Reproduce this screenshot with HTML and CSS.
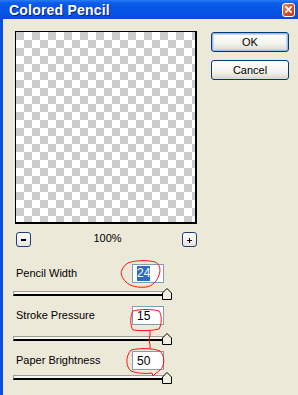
FILE: index.html
```html
<!DOCTYPE html>
<html lang="en">
<head>
    <meta charset="UTF-8">
    <meta name="viewport" content="width=device-width, initial-scale=1.0">
    <title>Colored Pencil</title>
    <link rel="stylesheet" href="styles.css">
</head>
<body>
    <div class="window">
        <div class="titlebar">
            <span class="title">Colored Pencil</span>
            <span class="closeBtn">
                <svg width="7" height="7" viewBox="0 0 7 7">
                    <path d="M1 1 L6 6 M6 1 L1 6" stroke="#fff" stroke-width="1.8" stroke-linecap="square"/>
                </svg>
            </span>
        </div>

        <div class="client">
            <div class="topRow">
                <div class="previewCol">
                    <div class="preview"></div>
                    <div class="zoomRow">
                        <span class="zoomBtn">
                            <svg width="13" height="13" viewBox="0 0 13 13"><rect x="4" y="6" width="5" height="2" fill="#000"/></svg>
                        </span>
                        <span class="zoomValue">100%</span>
                        <span class="zoomBtn">
                            <svg width="13" height="13" viewBox="0 0 13 13"><path d="M4 7.5 H9 M6.5 5 V10" stroke="#000" stroke-width="1"/></svg>
                        </span>
                    </div>
                </div>
                <div class="buttonCol">
                    <button class="dlgBtn defaultBtn">OK</button>
                    <button class="dlgBtn">Cancel</button>
                </div>
            </div>

            <div class="params">
                <div class="param">
                    <div class="paramHead">
                        <span class="paramLabel">Pencil Width</span>
                        <span class="paramBox"><span class="selected">24</span></span>
                    </div>
                    <div class="slider">
                        <div class="track"></div>
                        <svg class="thumb" width="10" height="12" viewBox="0 0 10 12"><polygon points="5,0.5 9.5,5 9.5,11.5 0.5,11.5 0.5,5" fill="#F1EFE2" stroke="#000"/></svg>
                    </div>
                </div>
                <div class="param">
                    <div class="paramHead">
                        <span class="paramLabel">Stroke Pressure</span>
                        <span class="paramBox">15</span>
                    </div>
                    <div class="slider">
                        <div class="track"></div>
                        <svg class="thumb" width="10" height="12" viewBox="0 0 10 12"><polygon points="5,0.5 9.5,5 9.5,11.5 0.5,11.5 0.5,5" fill="#F1EFE2" stroke="#000"/></svg>
                    </div>
                </div>
                <div class="param">
                    <div class="paramHead">
                        <span class="paramLabel">Paper Brightness</span>
                        <span class="paramBox">50</span>
                    </div>
                    <div class="slider">
                        <div class="track"></div>
                        <svg class="thumb" width="10" height="12" viewBox="0 0 10 12"><polygon points="5,0.5 9.5,5 9.5,11.5 0.5,11.5 0.5,5" fill="#F1EFE2" stroke="#000"/></svg>
                    </div>
                </div>
            </div>
        </div>

        <!-- hand drawn red marks over the value boxes -->
        <svg class="marks" width="298" height="395" viewBox="0 0 298 395">
            <g fill="none" stroke="#FF1010" stroke-width="1">
                <path d="M128 263 C136 260 148 260 155 262 C160 264 161 270 159 275 C157 281 153 286 146 287 C138 288 130 286 126 282 C122 278 120 273 122 270 C123 267 125 265 128 263 Z"/>
                <path d="M133 311 C140 309 152 309 159 311 C162 315 162 324 159 329 C152 331 140 331 133 330 C130 326 130 316 133 311 Z"/>
                <path d="M150 331 L150 335 L149 340 L150 345 L150 349"/>
                <path d="M131 350 C140 348 152 348 160 351 C165 356 165 366 160 370 C158 372 156 373 155 374 L153 376 L152 373 C144 374 136 373 131 371 C126 367 125 357 131 350 Z"/>
            </g>
        </svg>
    </div>
</body>
</html>
```

FILE: styles.css
```css
* {
    box-sizing: border-box;
}
body {
    margin: 0;
    background-color: #ECE9D8;
    font-family: "Liberation Sans", Arial, sans-serif;
    font-size: 11px;
    color: #000;
    overflow: hidden;
}
.window {
    position: relative;
    width: 298px;
    height: 395px;
}
.titlebar {
    height: 19px;
    display: flex;
    align-items: center;
    justify-content: space-between;
    padding: 0 3px 0 9px;
    background: linear-gradient(#2A7AF6 0, #0A5DEA 3px, #0655E5 8px, #0453E3 15px, #0A4BD0 19px);
}
.title {
    color: #fff;
    font-weight: bold;
    font-size: 14px;
    letter-spacing: 0.2px;
    text-shadow: 1px 1px 0 #0A1E7A;
    margin-top: 1px;
}
.closeBtn {
    width: 13px;
    height: 14px;
    display: flex;
    align-items: center;
    justify-content: center;
    border: 1px solid #fff;
    border-radius: 3px;
    background: linear-gradient(135deg, #EE8A6A, #E0502A 50%, #C23A15);
}
.client {
    height: 376px;
    border-left: 3px solid #0B4FDE;
    padding: 12px 0 0 12px;
}
.topRow {
    display: flex;
}
.previewCol {
    width: 182px;
}
.preview {
    width: 182px;
    height: 193px;
    border: 1px solid #000;
    border-right-width: 2px;
    border-bottom-width: 2px;
    background: repeating-conic-gradient(#CCCCCC 0 25%, #FFFFFF 0 50%) 8px 0 / 16px 16px;
}
.zoomRow {
    display: flex;
    align-items: center;
    justify-content: space-between;
    margin-top: 8px;
    padding-left: 1px;
}
.zoomBtn {
    width: 15px;
    height: 15px;
    display: flex;
    align-items: center;
    justify-content: center;
    border: 1px solid #1C3F7C;
    border-radius: 3px;
    background: linear-gradient(#FFFFFF, #E6E4DA);
}
.zoomValue {
    margin-top: -3px;
    margin-left: 2px;
}
.buttonCol {
    display: flex;
    flex-direction: column;
    gap: 8px;
    margin-left: 14px;
    margin-top: 1px;
}
.dlgBtn {
    width: 78px;
    height: 20px;
    padding: 0;
    font-family: "Liberation Sans", Arial, sans-serif;
    font-size: 11px;
    color: #000;
    border: 1px solid #003C74;
    border-radius: 3px;
    background: linear-gradient(#FFFFFF, #F4F3EE 60%, #D9D6CA);
}
.defaultBtn {
    box-shadow: inset 0 0 0 1px #9CB9EE, inset 0 0 0 2px #C6D7F5;
}
.params {
    margin-top: 17px;
}
.param + .param {
    margin-top: 10px;
}
.paramHead {
    display: flex;
    align-items: center;
    height: 19px;
    padding-left: 1px;
}
.paramLabel {
    width: 116px;
    margin-top: -2px;
}
.paramBox {
    width: 32px;
    height: 19px;
    display: flex;
    align-items: center;
    padding-left: 4px;
    border: 1px solid #7F9DB9;
    background: #fff;
    font-size: 12px;
}
.selected {
    background: #316AC5;
    color: #fff;
    padding: 1px 0;
    line-height: 13px;
}
.slider {
    position: relative;
    margin-left: -2px;
    width: 158px;
    height: 5px;
    margin-top: 8px;
}
.param:nth-child(2) .slider {
    margin-top: 11px;
}
.param:nth-child(3) .slider {
    margin-top: 5px;
}
.track {
    width: 154px;
    height: 5px;
    background: #F7F6EF;
    border-top: 1px solid #9D9C97;
    border-left: 1px solid #9D9C97;
    border-bottom: 2px solid #000;
    border-right: 1px solid #000;
}
.thumb {
    position: absolute;
    left: 149px;
    top: -3px;
}
.marks {
    position: absolute;
    top: 0;
    left: 0;
    pointer-events: none;
}
```
